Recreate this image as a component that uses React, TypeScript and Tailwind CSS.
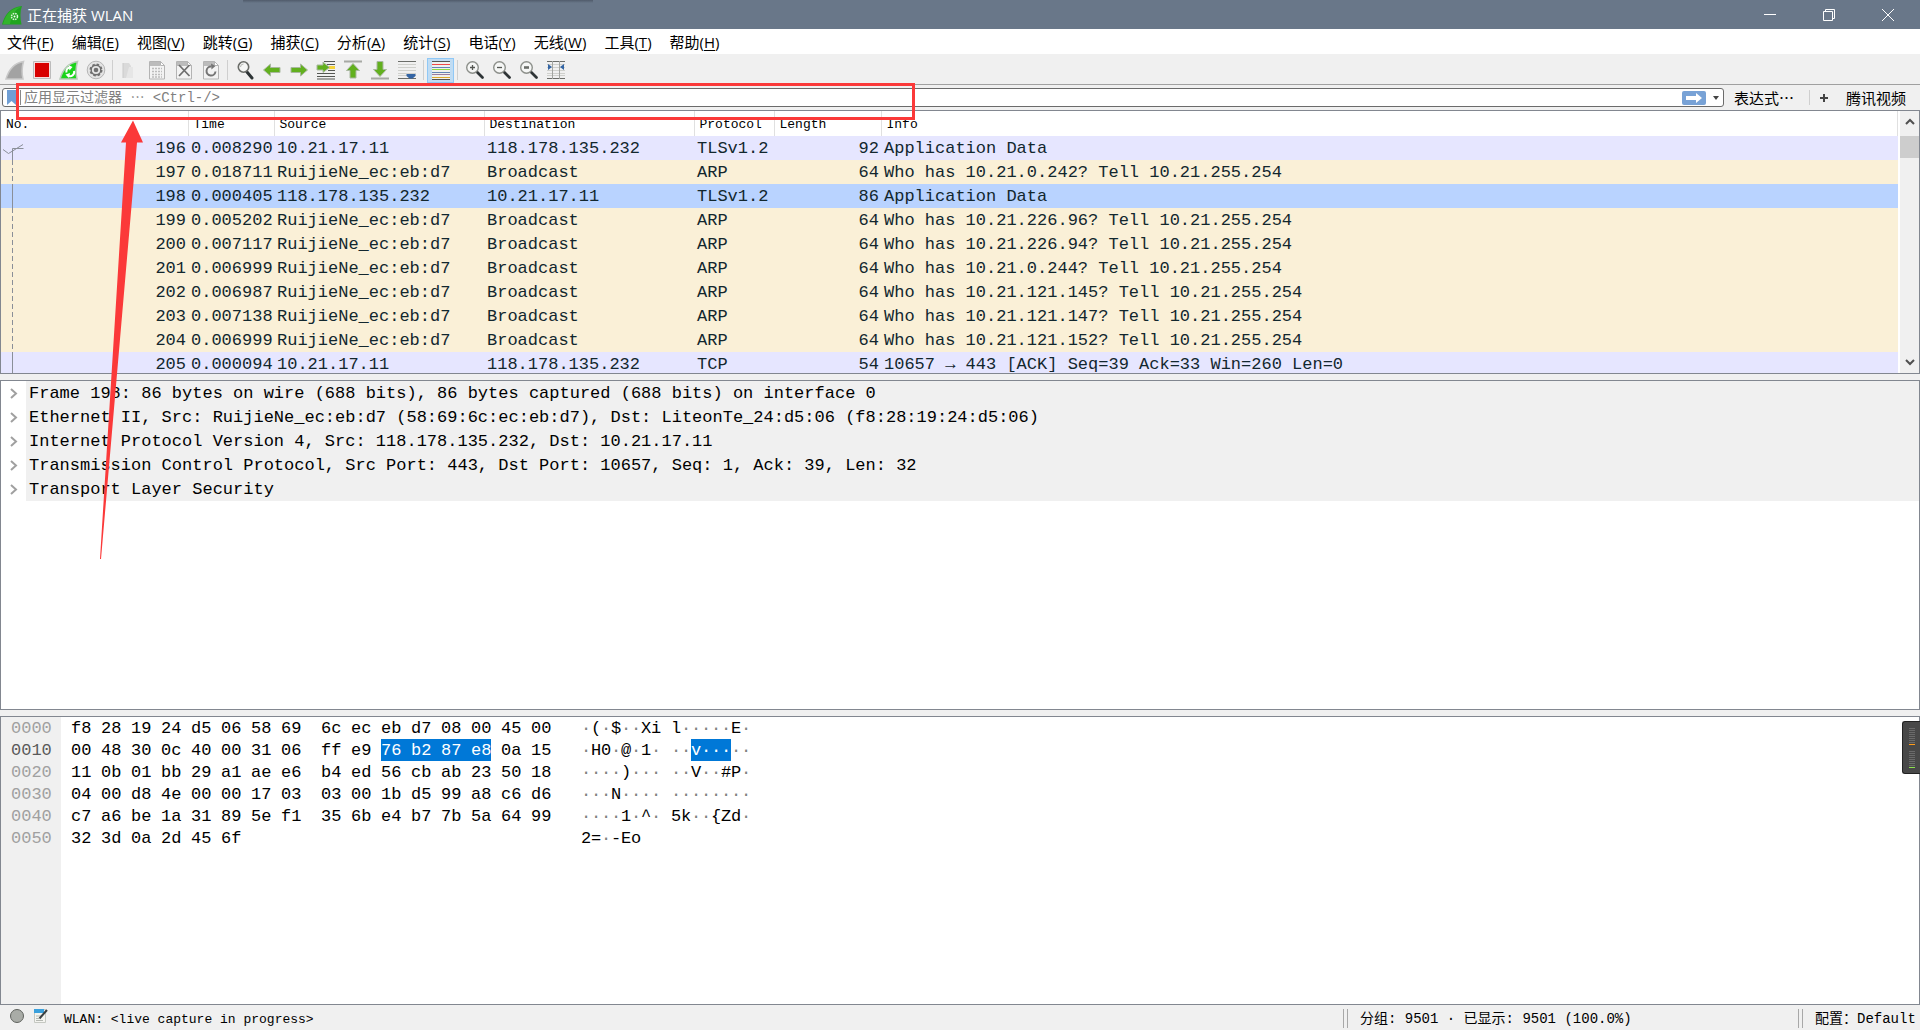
import { useState, type ReactNode } from "react";

type Packet = { no: number; time: string; src: string; dst: string; proto: string; len: number; info: string; related?: "first" | "same" };

const MENUS = [
  ["文件", "F"], ["编辑", "E"], ["视图", "V"], ["跳转", "G"], ["捕获", "C"], ["分析", "A"],
  ["统计", "S"], ["电话", "Y"], ["无线", "W"], ["工具", "T"], ["帮助", "H"],
];

const arp = (no: number, time: string, ip: string): Packet => ({
  no, time, src: "RuijieNe_ec:eb:d7", dst: "Broadcast", proto: "ARP", len: 64, info: `Who has ${ip}? Tell 10.21.255.254`,
});

const PACKETS: Packet[] = [
  { no: 196, time: "0.008290", src: "10.21.17.11", dst: "118.178.135.232", proto: "TLSv1.2", len: 92, info: "Application Data", related: "first" },
  arp(197, "0.018711", "10.21.0.242"),
  { no: 198, time: "0.000405", src: "118.178.135.232", dst: "10.21.17.11", proto: "TLSv1.2", len: 86, info: "Application Data", related: "same" },
  arp(199, "0.005202", "10.21.226.96"),
  arp(200, "0.007117", "10.21.226.94"),
  arp(201, "0.006999", "10.21.0.244"),
  arp(202, "0.006987", "10.21.121.145"),
  arp(203, "0.007138", "10.21.121.147"),
  arp(204, "0.006999", "10.21.121.152"),
  { no: 205, time: "0.000094", src: "10.21.17.11", dst: "118.178.135.232", proto: "TCP", len: 54, info: "10657 → 443 [ACK] Seq=39 Ack=33 Win=260 Len=0", related: "same" },
];

const DETAILS = [
  "Frame 198: 86 bytes on wire (688 bits), 86 bytes captured (688 bits) on interface 0",
  "Ethernet II, Src: RuijieNe_ec:eb:d7 (58:69:6c:ec:eb:d7), Dst: LiteonTe_24:d5:06 (f8:28:19:24:d5:06)",
  "Internet Protocol Version 4, Src: 118.178.135.232, Dst: 10.21.17.11",
  "Transmission Control Protocol, Src Port: 443, Dst Port: 10657, Seq: 1, Ack: 39, Len: 32",
  "Transport Layer Security",
];

const HEX = [
  "f8 28 19 24 d5 06 58 69 6c ec eb d7 08 00 45 00",
  "00 48 30 0c 40 00 31 06 ff e9 76 b2 87 e8 0a 15",
  "11 0b 01 bb 29 a1 ae e6 b4 ed 56 cb ab 23 50 18",
  "04 00 d8 4e 00 00 17 03 03 00 1b d5 99 a8 c6 d6",
  "c7 a6 be 1a 31 89 5e f1 35 6b e4 b7 7b 5a 64 99",
  "32 3d 0a 2d 45 6f",
].map(l => l.split(" "));

// highlighted field: bytes 10..13 of the second line
const SEL = { line: 1, from: 10, to: 14 };

export default function App() {
  const [filter, setFilter] = useState("");
  const [selected, setSelected] = useState(198);

  return (
    <div lang="zh-CN" className="relative flex h-screen flex-col overflow-hidden bg-[#f0f0f0] font-['Open_Sans','Noto_Sans_CJK_SC',sans-serif] text-[15px] text-black">
      <TitleBar />
      <nav className="flex h-[25px] shrink-0 items-center gap-[18px] bg-white pl-[7px]">
        {MENUS.map(([label, key]) => (
          <button key={key} className="whitespace-nowrap leading-6">{label}(<span className="underline underline-offset-2">{key}</span>)</button>
        ))}
      </nav>
      <Toolbar />
      <FilterBar value={filter} onChange={setFilter} />
      <main className="flex min-h-0 flex-1 flex-col gap-1.5 font-['Liberation_Mono',monospace] text-[17px]">
        <PacketList selected={selected} onSelect={setSelected} />
        <DetailTree />
        <HexDump />
      </main>
      <StatusBar />
      <LoadMeter />
      <Annotation />
    </div>
  );
}

function TitleBar() {
  return (
    <header className="relative flex h-[29px] shrink-0 items-center bg-[#697789] text-white">
      <div className="absolute left-[243px] top-0 h-[3px] w-[350px] bg-linear-to-b from-[#505b6b] to-[#697789]" />
      <svg className="ml-0.5 size-5" viewBox="0 0 20 20">
        <path d="M0 19.5C3 9 8 2.500 20 1c-2 5-2 12-.5 18.500z" fill="#1fa51f" />
        <path d="M1 19C4 9 9 3 19 2c-5 2-9 7-11 17z" fill="#45c33a" opacity=".5" />
        <circle cx="12.500" cy="11.500" r="3" fill="none" stroke="#d8f5d5" strokeWidth="1.500" strokeDasharray="1.600 .8" />
        <circle cx="12.500" cy="11.500" r="1" fill="#fff" />
      </svg>
      <h1 className="ml-[5px] leading-6">正在捕获 WLAN</h1>
      <div className="ml-auto flex h-full pr-[3px]">
        <WinButton label="最小化"><path d="M0 5.500h12" /></WinButton>
        <WinButton label="还原"><path d="M.5 2.500h9v9h-9zM2.500 2.500v-2h9v9h-2" /></WinButton>
        <WinButton label="关闭"><path d="M0 0l12 12M12 0L0 12" /></WinButton>
      </div>
    </header>
  );
}

function WinButton({ label, children }: { label: string; children: ReactNode }) {
  return (
    <button aria-label={label} className="flex w-[59px] items-center justify-center">
      <svg className="size-3 overflow-visible" viewBox="0 0 12 12" fill="none" stroke="#fff" strokeWidth="1">{children}</svg>
    </button>
  );
}

/* ---- toolbar ---- */

function Tool({ label, active, children }: { label: string; active?: boolean; children: ReactNode }) {
  return (
    <button aria-label={label} className={active ? "flex h-[25px] w-[27px] items-center justify-center border border-[#90c8f6] bg-[#c0dcf3]" : "flex h-[25px] w-[27px] items-center justify-center"}>
      <svg className="size-5 shrink-0" viewBox="0 0 20 20" fill="none">{children}</svg>
    </button>
  );
}

function Sep() {
  return <span className="mx-[3px] h-5 w-px bg-[#cfcfcf]" />;
}

function Page({ children }: { children: ReactNode }) {
  return (
    <>
      <path d="M2.500 1.500h11l4 4v13.500h-15z" fill="#f3f3f3" stroke="#b4b4b4" />
      <path d="M3 2h10v4H3z" fill="#bcbcbc" />
      <path d="M13.500 1.500v4h4z" fill="#fff" stroke="#b4b4b4" />
      {children}
    </>
  );
}

function Lines() {
  return (
    <>
      <path d="M1 1.500h18M1 18.500h18" stroke="#6b6d69" />
      <path d="M1 4.500h18M1 7.500h18M1 10.500h18M1 13.500h18M1 15.500h18" stroke="#cfd0cc" />
    </>
  );
}

function Lens({ children }: { children?: ReactNode }) {
  return (
    <>
      <path d="M12 12l5.500 5.500" stroke="#2e3436" strokeWidth="2.800" strokeLinecap="round" />
      <circle cx="7.500" cy="7.500" r="5.800" fill="#f6f7f6" stroke="#8d908b" strokeWidth="1.400" />
      {children}
    </>
  );
}

const ARROW = "M1.500 10l7-6v3.500h9.500v5H8.500V16z";

function Toolbar() {
  return (
    <div role="toolbar" aria-label="主工具栏" className="mt-0.5 flex h-[29px] shrink-0 items-center border-b border-[#a0a0a0] pl-px">
      <Tool label="开始捕获">
        <path d="M1 19C4 9 9 3 18.500 1.500c-1.500 5-2 11-.5 17.500z" fill="#a3a3a3" stroke="#c9c9c9" strokeWidth="1.500" />
      </Tool>
      <Tool label="停止捕获">
        <path d="M1.500 1.500h17v17h-17z" fill="#f7dcdc" stroke="#bcbcbc" />
        <path d="M3 3h14v14H3z" fill="#d80000" />
      </Tool>
      <Tool label="重新开始捕获">
        <path d="M1 19C4 9 9 3 18.500 1.500c-1.500 5-2 11-.5 17.500z" fill="#19d419" stroke="#b9c9b9" strokeWidth="1.500" />
        <path d="M7.500 12.500a4 4 0 0 1 3-5M15 11a4 4 0 0 1-6 4.500" stroke="#fff" strokeWidth="2" />
        <path d="M9.500 5l4 2-3 3.500zM11 13l-4.500 1.500L10 18z" fill="#fff" />
      </Tool>
      <Tool label="捕获选项">
        <circle cx="10" cy="10" r="8.800" fill="#e4e4e4" stroke="#b5b5b5" />
        <circle cx="10" cy="10" r="5.500" stroke="#6f6f6f" strokeWidth="2" strokeDasharray="2.400 1.920" />
        <circle cx="10" cy="10" r="4.800" stroke="#6f6f6f" strokeWidth="1.400" />
        <circle cx="10" cy="10" r="2.300" fill="#6f6f6f" />
      </Tool>
      <Sep />
      <Tool label="打开">
        <path d="M3 3h6l2 3v12H3z" fill="#dadada" /><path d="M9 7h4v11H6z" fill="#e6e6e6" /><path d="M3 3v15" stroke="#cacaca" />
      </Tool>
      <Tool label="保存">
        <Page><path d="M5 8.500h10M5 11.500h10M5 14.500h10M5 17h10" stroke="#bdbdbd" strokeWidth="1.500" strokeDasharray="2 1" /></Page>
      </Tool>
      <Tool label="关闭文件"><Page><path d="M5 5l10.500 11M15.500 5L5 16" stroke="#6f6f6f" strokeWidth="1.800" /></Page></Tool>
      <Tool label="重新加载">
        <Page><path d="M14.500 11.500a4.500 4.500 0 1 1-4-5" stroke="#757575" strokeWidth="2" /><path d="M10 3.500l4.500 2.500-4 3.500z" fill="#757575" /></Page>
      </Tool>
      <Sep />
      <Tool label="查找分组">
        <path d="M12 12l5 6" stroke="#2e3436" strokeWidth="3" strokeLinecap="round" />
        <circle cx="8.500" cy="7" r="5.200" fill="#f6f7f6" stroke="#6b6d69" strokeWidth="1.600" />
        <path d="M5.500 7a3 3 0 0 1 3-3" stroke="#b4b6b2" />
      </Tool>
      <Tool label="上一分组"><path d={ARROW} fill="#62b01e" stroke="#a9b8a0" /></Tool>
      <Tool label="下一分组"><path d="M18.500 10l-7-6v3.500H2v5h9.500V16z" fill="#62b01e" stroke="#a9b8a0" /></Tool>
      <Tool label="转到分组">
        <path d="M8 1.500h11M11 4.500h8M1 13.500h18M1 16.500h18M1 19h18" stroke="#555753" strokeWidth="1.200" />
        <path d="M13 7.500h6" stroke="#f5d33b" strokeWidth="3" /><path d="M12 10.500h7" stroke="#555753" />
        <path d="M1 5h6V2l6.500 5.500L7 12.500V10H1z" fill="#62b01e" stroke="#a9b8a0" />
      </Tool>
      <Tool label="首个分组">
        <path d="M1 1.500h18" stroke="#a7a9a4" strokeWidth="2" /><path d="M10 3.500l6.500 7H13V18H7v-7.500H3.500z" fill="#62b01e" stroke="#a9b8a0" />
      </Tool>
      <Tool label="最新分组">
        <path d="M1 18.500h18" stroke="#a7a9a4" strokeWidth="2" /><path d="M10 16.500l6.500-7H13V1.500H7v8H3.500z" fill="#62b01e" stroke="#a9b8a0" />
      </Tool>
      <Tool label="自动滚动"><Lines /><path d="M9.500 14h9v2l-3 2.500h-3l-3-2.500z" fill="#3465a4" /></Tool>
      <Sep />
      <Tool label="着色" active>
        <path d="M1 2h18v17H1z" fill="#f0f1ee" />
        <path d="M1 1.500h18M1 19.500h18" stroke="#555753" />
        <path d="M1 4.500h18" stroke="#ef4949" /><path d="M1 7.500h18" stroke="#6385b5" />
        <path d="M1 9.500h18" stroke="#8edb42" /><path d="M1 12.500h18" stroke="#6385b5" />
        <path d="M1 14.500h18" stroke="#9a7da0" /><path d="M1 17.500h18" stroke="#dba92c" />
      </Tool>
      <Sep />
      <Tool label="放大"><Lens><path d="M5 7.500h5M7.500 5v5" stroke="#555753" strokeWidth="1.300" /></Lens></Tool>
      <Tool label="缩小"><Lens><path d="M5 7.500h5" stroke="#555753" strokeWidth="1.300" /></Lens></Tool>
      <Tool label="正常大小"><Lens><path d="M5 7.500h5" stroke="#6b6d69" strokeWidth="2.600" /></Lens></Tool>
      <Tool label="调整列宽">
        <Lines /><path d="M6.500 1v18M13.500 1v18" stroke="#a3a5a1" />
        <path d="M2 4l4 3-4 3zM18 4l-4 3 4 3z" fill="#3465a4" />
      </Tool>
    </div>
  );
}

function FilterBar({ value, onChange }: { value: string; onChange: (v: string) => void }) {
  return (
    <form className="flex h-[25px] shrink-0 items-center pr-[14px]" onSubmit={e => e.preventDefault()}>
      <div className="ml-0.5 flex h-[19px] flex-1 items-center rounded-[3px] border border-[#6b6b6b] bg-white">
        <button type="button" aria-label="书签" className="ml-1 flex w-[14px] items-center border-r border-[#888]">
          <svg className="h-[15px] w-[9px]" viewBox="0 0 9 15"><path d="M0 0h9v15l-4.500-4L0 15z" fill="#6f9ed4" /></svg>
        </button>
        <input
          aria-label="显示过滤器"
          className="h-full min-w-0 flex-1 bg-transparent pl-[3px] font-['Liberation_Mono','Noto_Sans_CJK_SC',monospace] text-sm leading-4 outline-none placeholder:text-[#808080]"
          placeholder="应用显示过滤器 ⋯ <Ctrl-/>"
          value={value}
          onChange={e => onChange(e.target.value)}
        />
        <button type="submit" aria-label="应用" className="flex h-[14px] w-6 items-center justify-center rounded-[2px] bg-[#78a2d6]">
          <svg className="h-2.5 w-4" viewBox="0 0 16 10"><path d="M0 3h10V0l6 5-6 5V7H0z" fill="#fff" /></svg>
        </button>
        <button type="button" aria-label="历史" className="flex w-[17px] items-center justify-center pl-1">
          <svg className="h-1 w-1.5" viewBox="0 0 6 4"><path d="M0 0h6L3 4z" fill="#444" /></svg>
        </button>
      </div>
      <button type="button" className="ml-2.5 whitespace-nowrap leading-5">表达式⋯</button>
      <span className="ml-[15px] h-[15px] w-px bg-[#cfcfcf]" />
      <button type="button" aria-label="添加" className="ml-2.5">
        <svg className="size-2" viewBox="0 0 8 8"><path d="M4 0v8M0 4h8" stroke="#444" strokeWidth="2" /></svg>
      </button>
      <button type="button" className="ml-[18px] whitespace-nowrap leading-5">腾讯视频</button>
    </form>
  );
}

/* ---- panes ---- */

function rowColor(p: Packet, selected: boolean) {
  if (selected) return "bg-[#b9d3ff]";
  return p.proto === "ARP" ? "bg-[#faf0d7]" : "bg-[#e6e6ff]";
}

function Related({ kind }: { kind?: "first" | "same" }) {
  return (
    <svg className="h-6 w-6 shrink-0" viewBox="0 0 24 24" fill="none" stroke="#8a8f98">
      {kind === "first" && <path d="M11.500 24V12.500h11M2 13.500l5.500 4 14.500-9" />}
      {kind === "same" && <path d="M11.500 0v24" />}
      {!kind && <path d="M11.500 0v24" strokeDasharray="5 3" />}
    </svg>
  );
}

function PacketList({ selected, onSelect }: { selected: number; onSelect: (no: number) => void }) {
  const th = "border-r border-[#e0e0e0] pl-[5px] pt-0.5 text-left font-normal";
  const td = "p-0 pl-[3px] pt-0.5 leading-[22px]";
  return (
    <section className="flex min-h-0 flex-[264_1_0] overflow-hidden border border-[#828790] bg-white">
      <div className="min-w-0 flex-1">
        <table className="w-full table-fixed border-collapse whitespace-nowrap text-[#12272e]">
          <colgroup>
            <col className="w-[187px]" /><col className="w-[86px]" /><col className="w-[210px]" /><col className="w-[210px]" />
            <col className="w-[80px]" /><col className="w-[107px]" /><col />
          </colgroup>
          <thead>
            <tr className="h-[25px] text-[13px] leading-4 text-black">
              {["No.", "Time", "Source", "Destination", "Protocol", "Length", "Info"].map(h => <th key={h} scope="col" className={th}>{h}</th>)}
            </tr>
          </thead>
          <tbody>
            {PACKETS.map(p => (
              <tr key={p.no} className={rowColor(p, p.no === selected)} onClick={() => onSelect(p.no)}>
                <td className="p-0">
                  <div className="flex h-6 justify-between pr-0.5"><Related kind={p.related} /><span className="pt-0.5 leading-[22px]">{p.no}</span></div>
                </td>
                <td className={td}>{p.time}</td>
                <td className={td}>{p.src}</td>
                <td className={td}>{p.dst}</td>
                <td className={td}>{p.proto}</td>
                <td className="p-0 pr-0.5 pt-0.5 text-right leading-[22px]">{p.len}</td>
                <td className={td}>{p.info}</td>
              </tr>
            ))}
          </tbody>
        </table>
      </div>
      <div className="flex w-[21px] shrink-0 flex-col items-center border-l-2 border-white bg-[#f0f0f0]">
        <button aria-label="向上滚动" className="flex h-[25px] w-full items-center justify-center pb-1">
          <svg className="h-[7px] w-2.5" viewBox="0 0 10 7" fill="none" stroke="#505050" strokeWidth="2"><path d="M1 6l4-4 4 4" /></svg>
        </button>
        <div className="h-[22px] w-full bg-[#cdcdcd]" />
        <button aria-label="向下滚动" className="mt-auto flex h-[22px] w-full items-center justify-center">
          <svg className="h-[7px] w-2.5" viewBox="0 0 10 7" fill="none" stroke="#505050" strokeWidth="2"><path d="M1 1l4 4 4-4" /></svg>
        </button>
      </div>
    </section>
  );
}

function DetailTree() {
  return (
    <section className="min-h-0 flex-[330_1_0] overflow-hidden border border-[#828790] bg-white">
      <ul>
        {DETAILS.map(d => (
          <li key={d} className="flex h-6 whitespace-nowrap leading-[22px]">
            <button aria-label="展开" className="flex w-[25px] shrink-0 items-center justify-center">
              <svg className="h-[11px] w-2" viewBox="0 0 8 11" fill="none" stroke="#a0a0a0" strokeWidth="2"><path d="M1 1l5 4.500L1 10" /></svg>
            </button>
            <span className="flex-1 bg-[#f0f0f0] pl-[3px] pt-0.5">{d}</span>
          </li>
        ))}
      </ul>
    </section>
  );
}

function Bytes({ list }: { list: string[] }) {
  return <>{list.map((b, i) => <span key={i} className="w-5 pt-0.5">{b}</span>)}</>;
}

function toAscii(b: string) {
  const c = parseInt(b, 16);
  return c > 32 && c < 127 ? String.fromCharCode(c) : "·";
}

function Ascii({ list, lit }: { list: string[]; lit?: boolean }) {
  return (
    <>
      {list.map((b, i) => {
        const ch = toAscii(b);
        return <span key={i} className={ch === "·" && !lit ? "w-2.5 pt-0.5 text-[#808080]" : "w-2.5 pt-0.5"}>{ch}</span>;
      })}
    </>
  );
}

function HexLine({ line, bytes }: { line: number; bytes: string[] }) {
  const hit = line === SEL.line;
  const right = bytes.slice(8);
  const from = SEL.from - 8;
  const to = SEL.to - 8;
  return (
    <div className="flex h-[22px] whitespace-pre leading-5">
      <div className="flex w-[510px] gap-5">
        <div className="flex gap-2.5"><Bytes list={bytes.slice(0, 8)} /></div>
        <div className="flex gap-2.5">
          {hit ? <><Bytes list={right.slice(0, from)} /><span className="flex gap-2.5 bg-[#0078d7] text-white"><Bytes list={right.slice(from, to)} /></span><Bytes list={right.slice(to)} /></> : <Bytes list={right} />}
        </div>
      </div>
      <div className="flex gap-2.5">
        <div className="flex"><Ascii list={bytes.slice(0, 8)} /></div>
        <div className="flex">
          {hit ? <><Ascii list={right.slice(0, from)} /><span className="flex bg-[#0078d7] text-white"><Ascii list={right.slice(from, to)} lit /></span><Ascii list={right.slice(to)} /></> : <Ascii list={right} />}
        </div>
      </div>
    </div>
  );
}

function HexDump() {
  return (
    <section className="flex min-h-0 flex-[289_1_0] overflow-hidden border border-[#828790] bg-white">
      <div className="w-[60px] shrink-0 bg-[#f0f0f0] pl-2.5 leading-5 text-[#a0a0a0]">
        {HEX.map((_, i) => <div key={i} className={i === SEL.line ? "pt-0.5 text-[#5a5a5a]" : "pt-0.5"}>{(i * 16).toString(16).padStart(4, "0")}</div>)}
      </div>
      <div className="pl-2.5">
        {HEX.map((bytes, i) => <HexLine key={i} line={i} bytes={bytes} />)}
      </div>
    </section>
  );
}

function StatusBar() {
  return (
    <footer className="flex h-[25px] shrink-0 items-center whitespace-nowrap font-['Liberation_Mono','Noto_Sans_CJK_SC',monospace] text-sm">
      <button aria-label="专家信息" className="mb-1 ml-2.5 size-[14px] rounded-full border border-[#5f625e] bg-[#a9aca7]" />
      <button aria-label="捕获文件注释" className="mb-1 ml-2.5">
        <svg className="size-[14px]" viewBox="0 0 14 14">
          <path d="M.5.5h11v13H.5z" fill="#f4f4f0" stroke="#c5c8c2" /><path d="M0 0h10v4H0z" fill="#3ba0dc" />
          <path d="M2 7h5M2 9.500h3M2 11.500h7" stroke="#b5b8b2" /><path d="M5.500 9.500L13 1" stroke="#3a3f41" strokeWidth="2" />
        </svg>
      </button>
      <span className="ml-4 mt-1 text-[13px] leading-4">WLAN: &lt;live capture in progress&gt;</span>
      <div className="ml-auto flex h-full w-[455px] items-center">
        <Grip /><span className="ml-3 mt-0.5 leading-4">分组: 9501 · 已显示: 9501 (100.0%)</span>
      </div>
      <div className="flex h-full w-[122px] items-center">
        <Grip /><span className="ml-3 mt-0.5 leading-4">配置：Default</span>
      </div>
    </footer>
  );
}

function Grip() {
  return <span className="mt-0.5 h-[19px] w-[5px] border-x border-[#a8a8a8]" />;
}

// system load gadget docked to the right screen edge
function LoadMeter() {
  return (
    <aside className="absolute right-0 top-[721px] flex h-[53px] w-[18px] flex-col items-center justify-center gap-1.5 rounded-l-[3px] border border-r-0 border-[#222] bg-[#484848]">
      {["bg-[#ff9c1a]", "bg-[#8be04e]"].map(c => (
        <div key={c} className="flex flex-col gap-px">
          {Array.from({ length: 8 }, (_, i) => <span key={i} className="h-px w-1.5 bg-[#6a6a6a]" />)}
          <span className={"h-px w-1.5 " + c} />
        </div>
      ))}
    </aside>
  );
}

function Annotation() {
  return (
    <svg className="pointer-events-none absolute left-0 top-0 h-[570px] w-[930px]" viewBox="0 0 930 570">
      <rect x="17.500" y="84.500" width="896" height="34" fill="none" stroke="#fb3939" strokeWidth="3" />
      <path d="M133 120.500l10 22h-6L101 559h-1L126 142.500h-5z" fill="#fb3939" />
    </svg>
  );
}
